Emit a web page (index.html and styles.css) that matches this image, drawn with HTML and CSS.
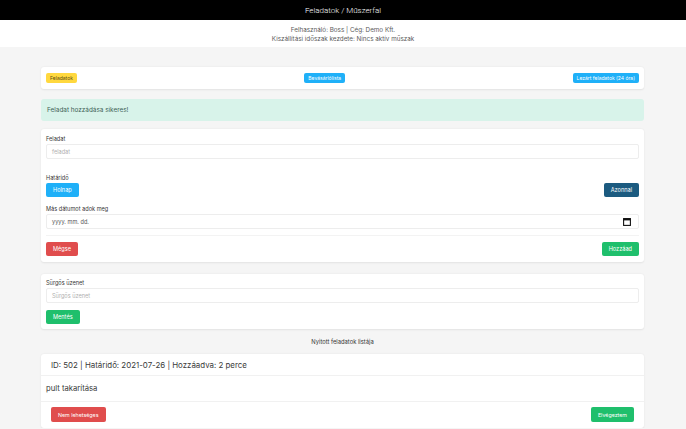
FILE: index.html
```html
<!DOCTYPE html>
<html lang="hu">
<head>
<meta charset="utf-8">
<link rel="stylesheet" href="styles.css">
</head>
<body>
<header class="topbar">Feladatok / Műszerfal</header>
<div class="subhead">
  <div>Felhasználó: Boss | Cég: Demo Kft.</div>
  <div>Kiszállítási időszak kezdete: Nincs aktív műszak</div>
</div>
<main class="container">
  <div class="card nav">
    <span class="btn tiny yellow">Feladatok</span>
    <span class="btn tiny info">Bevásárlólista</span>
    <span class="btn tiny info">Lezárt feladatok (24 óra)</span>
  </div>
  <div class="notice">Feladat hozzádása sikeres!</div>
  <div class="card form">
    <label class="label">Feladat</label>
    <div class="input placeholder">feladat</div>
    <label class="label gap">Határidő</label>
    <div class="row">
      <span class="btn info">Holnap</span>
      <span class="btn dark">Azonnal</span>
    </div>
    <label class="label">Más dátumot adok meg</label>
    <div class="input date"><span>yyyy. mm. dd.</span>
      <svg width="8" height="8" viewBox="0 0 8 8"><rect x="0.6" y="0.6" width="6.8" height="6.8" fill="none" stroke="#111" stroke-width="1.1"/><rect x="0.6" y="0.6" width="6.8" height="1.8" fill="#111"/></svg>
    </div>
    <div class="row footer">
      <span class="btn red">Mégse</span>
      <span class="btn green">Hozzáad</span>
    </div>
  </div>
  <div class="card form urgent">
    <label class="label">Sürgős üzenet</label>
    <div class="input placeholder">Sürgős üzenet</div>
    <div class="row">
      <span class="btn green">Mentés</span>
    </div>
  </div>
  <div class="listtitle">Nyitott feladatok listája</div>
  <div class="card task">
    <div class="taskhead">ID: 502 | Határidő: 2021-07-26 | Hozzáadva: 2 perce</div>
    <div class="taskbody">pult takarítása</div>
    <div class="row taskfoot">
      <span class="btn red wide">Nem lehetséges</span>
      <span class="btn green wide">Elvégeztem</span>
    </div>
  </div>
</main>
</body>
</html>
```
FILE: styles.css
```css
* { box-sizing: border-box; }
body {
  margin: 0;
  background: #f5f5f5;
  font-family: "Inter", "Liberation Sans", sans-serif;
  color: #363636;
  font-size: 6.5px;
}
.topbar {
  height: 20px;
  background: #000;
  color: #fff;
  font-family: "Roboto", "Liberation Sans", sans-serif;
  font-weight: 300;
  font-size: 8px;
  display: flex;
  align-items: center;
  justify-content: center;
}
.subhead {
  background: #fff;
  height: 27px;
  padding-top: 6px;
  text-align: center;
  color: #5a5a5a;
  font-size: 6.3px;
  line-height: 9px;
}
.container {
  margin: 20px 42px 0 41px;
}
.card {
  background: #fff;
  border-radius: 3px;
  box-shadow: 0 0.5px 2px rgba(10,10,10,0.08);
}
.nav {
  height: 22px;
  padding: 0 5px;
  display: flex;
  align-items: center;
  justify-content: space-between;
}
.btn {
  display: inline-flex;
  align-items: center;
  justify-content: center;
  height: 14px;
  padding: 0 7px;
  border-radius: 2px;
  color: #fff;
  font-size: 5.6px;
}
.btn.tiny {
  height: 10px;
  padding: 0 4px;
  font-size: 5px;
}
.yellow { background: #ffd83e; color: #5a4a10; }
.info { background: #1fb0f8; }
.dark { background: #1c5b80; }
.red { background: #e04d4d; }
.green { background: #1fbf6c; }
.wide { height: 15px; padding: 0 7px; font-size: 5.3px; }
.notice {
  margin-top: 10px;
  height: 22px;
  background: #d8f3ea;
  border-radius: 3px;
  padding-left: 6px;
  display: flex;
  align-items: center;
  color: #3f6257;
  font-size: 6.4px;
}
.form {
  margin-top: 8px;
  padding: 4px 5px 6px 5px;
  display: flex;
  flex-direction: column;
}
.label {
  font-size: 5.6px;
  color: #363636;
  height: 9px;
  line-height: 8px;
  margin-top: 2px;
}
.label.gap { margin-top: 15px; }
.input {
  height: 15px;
  border: 1px solid #ededed;
  border-radius: 2px;
  display: flex;
  align-items: center;
  padding: 0 5px;
  font-size: 5.6px;
}
.placeholder { color: #b0b0b0; }
.date { justify-content: space-between; color: #555; padding-right: 7px; margin-bottom: 6px; }
.row {
  display: flex;
  justify-content: space-between;
  align-items: center;
  margin-bottom: 6px;
}
.footer {
  border-top: 1px solid #f3f3f3;
  padding-top: 6px;
  margin-bottom: 0;
}
.urgent {
  margin-top: 12px;
  padding-top: 3px;
  padding-bottom: 5px;
}
.urgent .row { margin-top: 7px; margin-bottom: 0; }
.listtitle {
  text-align: center;
  margin: 9px 0 8px;
  font-size: 5.8px;
  color: #363636;
  line-height: 8px;
}
.task {
  padding: 0;
}
.taskhead {
  height: 22px;
  padding: 0 10px;
  display: flex;
  align-items: center;
  font-size: 7.9px;
  color: #3a3a3a;
  border-bottom: 1px solid #f1f1f1;
}
.taskbody {
  height: 26px;
  padding: 0 5px;
  display: flex;
  align-items: center;
  font-size: 7.7px;
  color: #3a3a3a;
  border-bottom: 1px solid #f1f1f1;
}
.taskfoot {
  padding: 5px 10px 6px;
  margin: 0;
}
```
